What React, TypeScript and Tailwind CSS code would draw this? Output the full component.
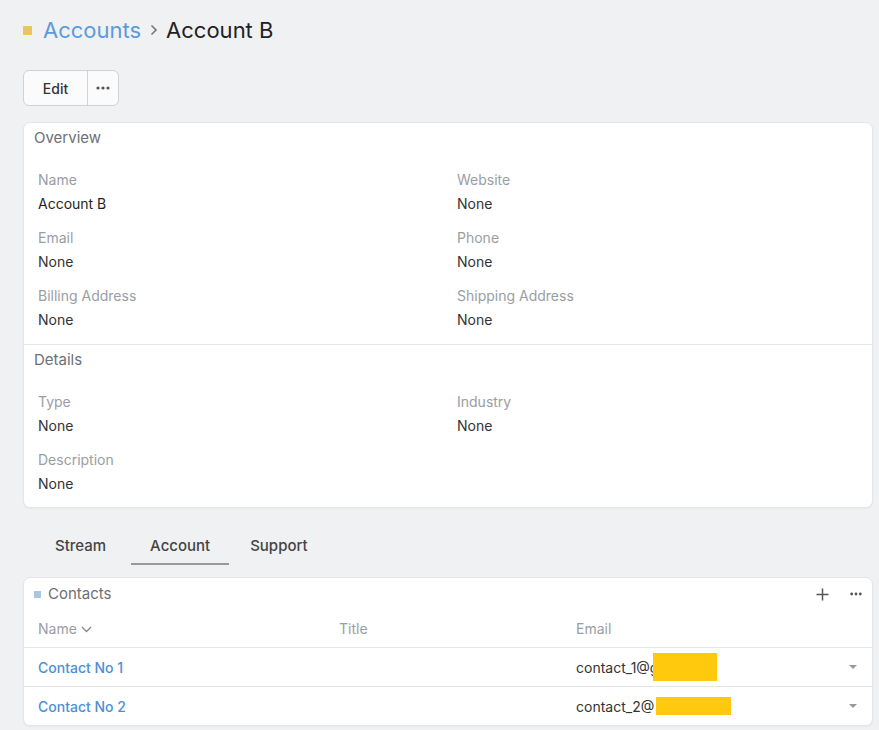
import React from "react";

const Field = ({ label, value, dark }: { label: string; value: string; dark?: boolean }) => (
  <div className="flex flex-col gap-[4px]">
    <div className="text-[14px] leading-[20px] text-[#999ea4]">{label}</div>
    <div className={"text-[14px] leading-[20px] " + (dark ? "text-[#1f1f1f]" : "text-[#333]")}>{value}</div>
  </div>
);

const Caret = () => (
  <svg width="10" height="6" viewBox="0 0 10 6"><path d="M1 1l4 4 4-4" fill="#999" /></svg>
);

export default function App() {
  return (
    <div className="min-h-[730px] w-[879px] bg-[#f0f1f3] pt-[15px]" style={{ fontFamily: "Inter, 'Noto Sans', sans-serif" }}>
      {/* Breadcrumb */}
      <div className="flex items-center h-[30px] pl-[23px]">
        <span className="w-[9px] h-[9px] bg-[#ecc558] rounded-[1px] mr-[11px]" />
        <span className="text-[22px] text-[#5c9bdb]">Accounts</span>
        <svg className="ml-[9px] mr-[8px]" width="8" height="12" viewBox="0 0 8 12"><path d="M1.5 1.5l4.5 4.5-4.5 4.5" fill="none" stroke="#777" strokeWidth="1.6" /></svg>
        <span className="text-[22px] text-[#222]">Account B</span>
      </div>

      {/* Buttons */}
      <div className="mt-[25px] ml-[23px] flex h-[36px] w-[96px] rounded-[6px] border border-[#cfd2d6] bg-[#fbfbfb]">
        <div className="w-[64px] flex items-center justify-center text-[14px] font-medium text-[#333] border-r border-[#cfd2d6]">Edit</div>
        <div className="flex-1 flex items-center justify-center">
          <svg width="14" height="4" viewBox="0 0 14 4"><circle cx="2" cy="2" r="1.6" fill="#555" /><circle cx="7" cy="2" r="1.6" fill="#555" /><circle cx="12" cy="2" r="1.6" fill="#555" /></svg>
        </div>
      </div>

      {/* Card */}
      <div className="mt-[16px] ml-[23px] w-[850px] bg-white rounded-[7px] border border-[#e3e5e8] shadow-[0_1px_2px_rgba(0,0,0,0.04)]">
        <div className="px-[10px] pt-[5px] pb-[14px] border-b border-[#e3e5e8]">
          <div className="text-[15px] leading-[20px] text-[#6d7075]">Overview</div>
          <div className="mt-[22px] pl-[4px] grid grid-cols-[419px_1fr] gap-y-[14px]">
            <Field label="Name" value="Account B" dark />
            <Field label="Website" value="None" />
            <Field label="Email" value="None" />
            <Field label="Phone" value="None" />
            <Field label="Billing Address" value="None" />
            <Field label="Shipping Address" value="None" />
          </div>
        </div>
        <div className="px-[10px] pt-[5px] pb-[13px]">
          <div className="text-[15px] leading-[20px] text-[#6d7075]">Details</div>
          <div className="mt-[22px] pl-[4px] grid grid-cols-[419px_1fr] gap-y-[14px]">
            <Field label="Type" value="None" />
            <Field label="Industry" value="None" />
            <Field label="Description" value="None" />
          </div>
        </div>
      </div>

      {/* Tabs */}
      <div className="mt-[20px] ml-[36px] flex">
        <div className="px-[19px] pt-[8px] pb-[7px] border-b-2 border-transparent text-[15px] leading-[20px] font-medium text-[#444]">Stream</div>
        <div className="ml-[6px] px-[19px] pt-[8px] pb-[7px] border-b-2 border-[#999] text-[15px] leading-[20px] font-medium text-[#444]">Account</div>
        <div className="ml-[2px] px-[19px] pt-[8px] pb-[7px] border-b-2 border-transparent text-[15px] leading-[20px] font-medium text-[#444]">Support</div>
      </div>

      {/* Contacts */}
      <div className="mt-[12px] ml-[23px] w-[850px] bg-white rounded-[7px] border border-[#e3e5e8] shadow-[0_1px_2px_rgba(0,0,0,0.04)]">
        <div className="flex items-center h-[31px] pt-[1px] px-[10px]">
          <span className="w-[7px] h-[7px] bg-[#a8c5e2] mr-[7px]" />
          <span className="text-[15px] text-[#6d7075]">Contacts</span>
          <div className="ml-auto flex items-center gap-[21px]">
            <svg width="13" height="13" viewBox="0 0 13 13"><path d="M6.5 0.5v12M0.5 6.5h12" stroke="#555" strokeWidth="1.5" /></svg>
            <svg width="12" height="4" viewBox="0 0 12 4"><circle cx="1.7" cy="2" r="1.4" fill="#555" /><circle cx="6" cy="2" r="1.4" fill="#555" /><circle cx="10.3" cy="2" r="1.4" fill="#555" /></svg>
          </div>
        </div>
        <div className="grid grid-cols-[301px_237px_1fr] pl-[14px] pt-[10px] pb-[8px] border-b border-[#e3e5e8] text-[14px] leading-[20px] text-[#999ea4]">
          <div className="flex items-center gap-[4px]">Name
            <svg width="11" height="7" viewBox="0 0 11 7"><path d="M1 1l4.5 4.5L10 1" fill="none" stroke="#888" strokeWidth="1.3" /></svg>
          </div>
          <div>Title</div>
          <div>Email</div>
        </div>
        <div className="grid grid-cols-[301px_237px_1fr] items-center pl-[14px] h-[39px] border-b border-[#e3e5e8] text-[14px]">
          <div className="text-[#4d8fd6] font-medium">Contact No 1</div>
          <div />
          <div className="flex items-center pr-[14px]">
            <span className="text-[#333]">contact_1@</span>
            <span className="inline-block w-[3px] overflow-hidden text-[#333]">g</span>
            <span className="inline-block w-[64px] h-[28px] bg-[#ffc90d]" />
            <span className="ml-auto"><Caret /></span>
          </div>
        </div>
        <div className="grid grid-cols-[301px_237px_1fr] items-center pl-[14px] h-[38px] text-[14px]">
          <div className="text-[#4d8fd6] font-medium">Contact No 2</div>
          <div />
          <div className="flex items-center pr-[14px]">
            <span className="text-[#333]">contact_2@</span>
            <span className="ml-[2px] inline-block w-[75px] h-[18px] bg-[#ffc90d]" />
            <span className="ml-auto"><Caret /></span>
          </div>
        </div>
      </div>
    </div>
  );
}
